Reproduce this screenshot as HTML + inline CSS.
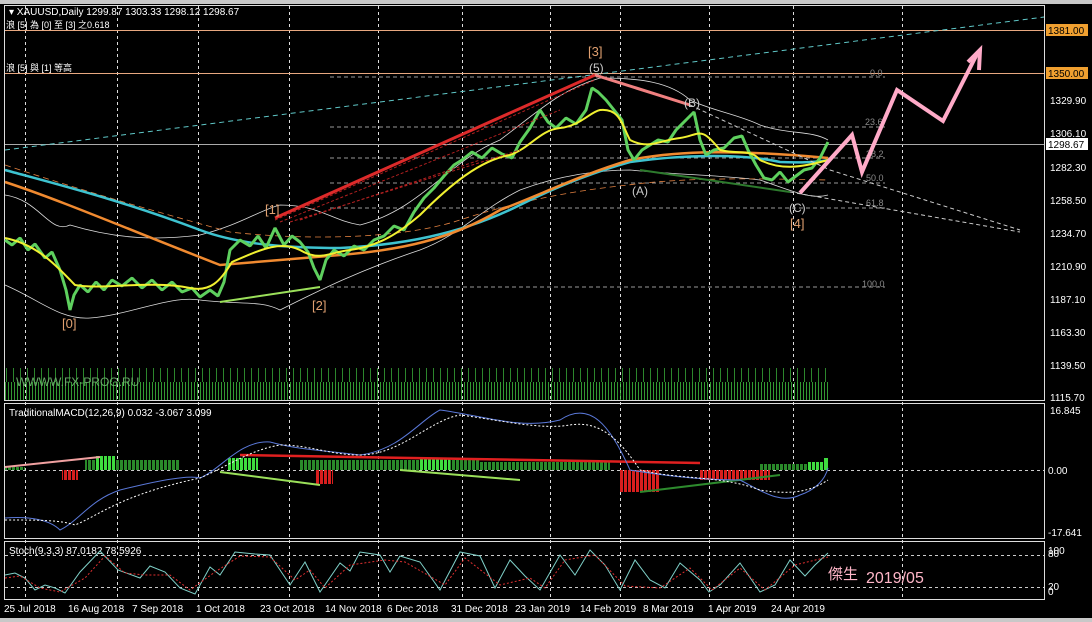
<!DOCTYPE html>
<html><head><meta charset="utf-8"><style>
html,body{margin:0;padding:0;background:#000;width:1092px;height:622px;overflow:hidden}
svg{display:block}
text{font-family:"Liberation Sans","Noto Sans CJK TC",sans-serif;}
</style></head><body>
<svg width="1092" height="622" viewBox="0 0 1092 622" xmlns="http://www.w3.org/2000/svg">
<defs>
<pattern id="vol" x="5" y="0" width="3" height="10" patternUnits="userSpaceOnUse"><rect x="0" y="0" width="1" height="10" fill="#3fbf3f"/></pattern>
<pattern id="vol2" x="6" y="0" width="7" height="10" patternUnits="userSpaceOnUse"><rect x="0" y="0" width="1" height="10" fill="#3fbf3f"/></pattern>
<pattern id="hg" x="0" y="0" width="4" height="10" patternUnits="userSpaceOnUse"><rect x="0" y="0" width="3" height="10" fill="#2a8a2a"/></pattern>
<pattern id="hl" x="0" y="0" width="4" height="10" patternUnits="userSpaceOnUse"><rect x="0" y="0" width="3" height="10" fill="#3fdc3f"/></pattern>
<pattern id="hr" x="0" y="0" width="4" height="10" patternUnits="userSpaceOnUse"><rect x="0" y="0" width="3" height="10" fill="#d81e1e"/></pattern>
</defs>
<rect width="1092" height="622" fill="#000"/>
<rect x="0" y="0" width="1092" height="4" fill="#c8c8c8"/>
<rect x="4.5" y="5.5" width="1040" height="395" fill="none" stroke="#ddd" stroke-width="1"/>
<rect x="4.5" y="403.5" width="1040" height="135" fill="none" stroke="#ddd" stroke-width="1"/>
<rect x="4.5" y="541.5" width="1040" height="58" fill="none" stroke="#ddd" stroke-width="1"/>
<g stroke="#ddd" stroke-dasharray="3,3" stroke-width="1">
<path d="M25.5 6V599M117.5 6V599M198.5 6V599M289.5 6V599M378.5 6V599M462.5 6V599M550.5 6V599M620.5 6V599M709.5 6V599M793.5 6V599M902.5 6V599"/>
</g>
<line x1="5" y1="30.5" x2="1044" y2="30.5" stroke="#e8a880" />
<line x1="5" y1="73.5" x2="1044" y2="73.5" stroke="#e8a880" />
<line x1="5" y1="144.5" x2="1044" y2="144.5" stroke="#aaa" />
<g stroke="#999" stroke-dasharray="4,3">
<path d="M330 77H885M330 127H885M330 158H885M330 183H885M330 208H885M330 287H885"/>
</g>
<g fill="#888" font-size="9"><text x="870" y="76">0.0</text><text x="865" y="125">23.6</text><text x="866" y="157">38.2</text><text x="866" y="181">50.0</text><text x="866" y="206">61.8</text><text x="862" y="287">100.0</text></g>
<line x1="5" y1="150" x2="1044" y2="17" stroke="#5fc7c7" stroke-dasharray="5,4"/>
<rect x="5" y="382" width="823" height="18" fill="url(#vol)" opacity="0.8"/>
<rect x="5" y="368" width="823" height="14" fill="url(#vol2)" opacity="0.7"/>
<text x="16" y="386" fill="#6a6" font-size="12">WWWW.FX-PROG.RU</text>
<g fill="none" stroke="#ddd" stroke-width="0.8">
<path d="M5 195 C40 200 50 235 70 225 C120 240 160 240 200 235 C240 225 260 210 280 205 C320 205 330 220 360 225 C420 210 450 160 500 140 C540 110 560 90 600 78 C640 78 670 82 690 100 C710 110 740 115 760 125 C790 135 810 130 828 140"/>
<path d="M5 285 C40 300 60 320 90 318 C130 315 170 295 200 300 C240 305 260 300 280 310 C320 290 360 270 420 250 C460 235 480 210 520 190 C560 175 600 170 630 170 C680 175 720 175 760 180 C790 190 810 200 828 195"/>
</g>
<path d="M5 165 C80 190 150 210 230 232 C300 240 400 240 460 220 C520 200 580 190 628 185 C680 178 740 178 828 180" fill="none" stroke="#e08040" stroke-dasharray="6,4" stroke-width="0.8"/>
<path d="M5 170 C60 185 120 200 200 230 C240 245 290 248 340 248 C400 245 460 235 520 205 C560 185 600 170 630 162 C680 155 740 153 780 162 C800 163 820 162 828 160" fill="none" stroke="#3ec3d0" stroke-width="2.5"/>
<path d="M5 182 C60 200 130 230 220 265 C260 262 300 258 340 255 C400 250 450 240 500 210 C540 195 580 175 630 160 C680 150 740 150 828 158" fill="none" stroke="#f08a30" stroke-width="2.5"/>
<path d="M5 240 L12 245 L20 238 L28 250 L35 244 L45 258 L52 252 L60 270 L66 290 L70 310 L74 295 L80 285 L88 292 L96 282 L104 290 L112 280 L122 286 L132 278 L142 288 L152 280 L162 290 L172 282 L182 292 L192 288 L200 297 L210 290 L218 296 L224 282 L230 250 L240 240 L250 246 L258 236 L266 248 L275 228 L284 245 L292 236 L300 242 L308 252 L314 268 L320 280 L326 260 L334 250 L344 256 L354 246 L364 250 L374 240 L384 236 L394 226 L404 230 L414 212 L424 198 L434 188 L444 176 L454 165 L462 160 L472 152 L482 158 L492 148 L502 154 L512 158 L520 142 L530 128 L540 110 L548 122 L556 128 L566 118 L576 124 L586 110 L592 88 L598 92 L606 100 L614 110 L622 120 L628 150 L634 160 L642 150 L650 145 L658 140 L668 142 L676 130 L686 120 L694 112 L700 140 L706 155 L714 150 L724 148 L734 138 L742 136 L748 150 L756 165 L764 178 L772 180 L780 172 L788 182 L796 176 L804 170 L812 168 L820 158 L828 142" fill="none" stroke="#5ed05e" stroke-width="3" stroke-linejoin="bevel"/>
<path d="M5 238 C40 245 60 270 75 285 C100 290 150 280 190 288 C210 292 220 282 232 262 C260 250 280 240 300 250 C320 262 330 252 350 250 C380 246 400 232 420 215 C450 185 480 160 510 155 C530 148 540 130 560 128 C580 126 590 112 600 110 C620 108 622 125 630 140 C650 150 660 140 680 138 C700 135 700 125 720 150 C740 155 750 148 760 160 C780 170 800 168 828 160" fill="none" stroke="#f0f030" stroke-width="2"/>
<path d="M220 302 L320 287" stroke="#9be05a" stroke-width="2"/>
<path d="M640 170 L790 192" stroke="#2d7a2d" stroke-width="2"/>
<path d="M275 218 L595 75" stroke="#dd2a2a" stroke-width="3"/>
<g stroke="#b02020" stroke-dasharray="3,2" stroke-width="1"><path d="M275 220 L595 80M280 222 L560 110M290 222 L520 150M300 220 L480 160"/></g>
<path d="M595 75 L690 105" stroke="#f08080" stroke-width="3"/>
<path d="M690 105 L830 170" stroke="#ccc" stroke-dasharray="4,3"/>
<path d="M790 192 L1020 232" stroke="#ccc" stroke-dasharray="4,3"/>
<path d="M830 170 L1020 230" stroke="#ccc" stroke-dasharray="4,3"/>
<path d="M800 193 L852 135 L862 172 L897 90 L943 121 L978 52" fill="none" stroke="#ffaac8" stroke-width="4" stroke-linejoin="miter"/>
<path d="M968 62 L980 50 L979 70" fill="none" stroke="#ffaac8" stroke-width="4"/>
<g fill="#e0a070" font-size="13"><text x="62" y="328">[0]</text><text x="265" y="214">[1]</text><text x="312" y="310">[2]</text><text x="588" y="56">[3]</text><text x="790" y="228">[4]</text></g>
<g fill="#ccc" font-size="12"><text x="589" y="72">(5)</text><text x="684" y="107">(B)</text><text x="632" y="195">(A)</text><text x="789" y="212">(C)</text></g>
<text x="9" y="15" fill="#fff" font-size="10">▾ XAUUSD,Daily  1299.87 1303.33 1298.12 1298.67</text>
<text x="6" y="28" fill="#fff" font-size="9">浪 [5] 為 [0] 至 [3] 之0.618</text>
<text x="6" y="71" fill="#fff" font-size="9">浪 [5] 與 [1] 等高</text>
<g fill="#fff" font-size="10">
<text x="1050" y="104">1329.90</text><text x="1050" y="137">1306.10</text><text x="1050" y="171">1282.30</text><text x="1050" y="204">1258.50</text><text x="1050" y="237">1234.70</text><text x="1050" y="270">1210.90</text><text x="1050" y="303">1187.10</text><text x="1050" y="336">1163.30</text><text x="1050" y="369">1139.50</text><text x="1050" y="401">1115.70</text>
<text x="1050" y="414">16.845</text><text x="1048" y="474">0.00</text><text x="1048" y="536">-17.641</text>
<text x="1048" y="554">100</text><text x="1048" y="557">80</text><text x="1048" y="590">20</text><text x="1048" y="595">0</text>
</g>
<rect x="1046" y="24" width="42" height="12" fill="#f0a030"/><text x="1048" y="34" font-size="10" fill="#000">1381.00</text>
<rect x="1046" y="67" width="42" height="12" fill="#f0a030"/><text x="1048" y="77" font-size="10" fill="#000">1350.00</text>
<rect x="1046" y="138" width="42" height="12" fill="#fff"/><text x="1048" y="148" font-size="10" fill="#000">1298.67</text>
<text x="9" y="416" fill="#fff" font-size="10">TraditionalMACD(12,26,9) 0.032 -3.067 3.099</text>
<line x1="5" y1="470.5" x2="1044" y2="470.5" stroke="#ccc" stroke-dasharray="3,3"/>
<g><rect x="5" y="467" width="20" height="3" fill="url(#hg)"/><rect x="85" y="460" width="95" height="10" fill="url(#hg)"/><rect x="300" y="460" width="180" height="10" fill="url(#hg)"/><rect x="480" y="462" width="130" height="8" fill="url(#hg)"/><rect x="760" y="464" width="65" height="6" fill="url(#hg)"/></g>
<g><rect x="95" y="456" width="20" height="14" fill="url(#hl)"/><rect x="228" y="458" width="30" height="12" fill="url(#hl)"/><rect x="420" y="458" width="30" height="12" fill="url(#hl)"/><rect x="808" y="462" width="16" height="8" fill="url(#hl)"/><rect x="824" y="458" width="4" height="12" fill="#3fdc3f"/></g>
<g><rect x="62" y="470" width="16" height="10" fill="url(#hr)"/><rect x="315" y="470" width="18" height="14" fill="url(#hr)"/><rect x="620" y="470" width="40" height="22" fill="url(#hr)"/><rect x="700" y="470" width="70" height="10" fill="url(#hr)"/></g>
<path d="M5 467 L100 457" stroke="#f0a0a0" stroke-width="2"/>
<path d="M240 455 L700 463" stroke="#e02020" stroke-width="2.5"/>
<path d="M220 472 L320 485" stroke="#9be05a" stroke-width="2"/>
<path d="M400 470 L520 480" stroke="#9be05a" stroke-width="2"/>
<path d="M640 492 L780 475" stroke="#2d8a2d" stroke-width="2"/>
<path d="M5 518 C30 516 50 520 60 530 C80 520 90 500 120 490 C160 480 190 475 200 478 C220 470 240 440 270 442 C300 450 320 450 360 455 C400 450 420 420 440 410 C480 415 520 430 560 420 C590 400 610 425 630 470 C660 475 700 480 740 480 C760 490 780 505 800 495 C815 490 825 480 828 468" fill="none" stroke="#5a78d8" stroke-width="1"/>
<path d="M5 520 C40 520 60 520 75 525 C100 515 120 495 200 478 C230 465 250 450 280 445 C310 445 330 455 360 455 C400 455 430 420 460 415 C500 420 540 430 570 425 C600 420 620 440 640 470 C680 480 720 475 760 490 C790 495 810 492 828 480" fill="none" stroke="#fff" stroke-width="1" stroke-dasharray="2,2"/>
<text x="9" y="554" fill="#fff" font-size="10">Stoch(9,3,3) 87.0182 78.5926</text>
<line x1="5" y1="555.5" x2="1044" y2="555.5" stroke="#ccc" stroke-dasharray="3,3"/>
<line x1="5" y1="587.5" x2="1044" y2="587.5" stroke="#ccc" stroke-dasharray="3,3"/>
<path d="M5 575 L15 573 L25 578 L35 590 L45 585 L55 588 L65 593 L80 572 L100 551 L118 570 L140 578 L150 566 L165 572 L180 588 L195 594 L210 567 L220 575 L235 552 L255 554 L270 555 L290 585 L305 562 L320 592 L340 563 L350 571 L360 552 L380 555 L390 572 L400 556 L420 562 L440 590 L460 552 L480 556 L495 588 L510 560 L525 576 L540 590 L560 555 L575 575 L590 550 L605 565 L620 590 L635 560 L650 580 L665 588 L680 563 L700 580 L709 592 L720 585 L740 563 L760 592 L775 585 L790 560 L805 576 L815 565 L828 553" fill="none" stroke="#7fd0c8" stroke-width="1"/>
<path d="M5 578 L20 576 L40 588 L60 592 L85 578 L105 556 L125 573 L145 575 L170 575 L190 590 L215 572 L240 556 L270 557 L295 580 L310 570 L325 588 L350 565 L385 560 L405 562 L445 585 L465 558 L500 585 L530 578 L545 588 L565 560 L595 555 L625 586 L660 588 L690 568 L712 590 L740 568 L765 590 L795 565 L828 557" fill="none" stroke="#e03030" stroke-width="1" stroke-dasharray="2,2"/>
<text x="828" y="579" fill="#ffb6c8" font-size="15">傑生</text><text x="866" y="583" fill="#ffb6c8" font-size="16">2019/05</text>
<g fill="#fff" font-size="10">
<text x="4" y="612">25 Jul 2018</text><text x="68" y="612">16 Aug 2018</text><text x="132" y="612">7 Sep 2018</text><text x="196" y="612">1 Oct 2018</text><text x="260" y="612">23 Oct 2018</text><text x="325" y="612">14 Nov 2018</text><text x="387" y="612">6 Dec 2018</text><text x="451" y="612">31 Dec 2018</text><text x="515" y="612">23 Jan 2019</text><text x="580" y="612">14 Feb 2019</text><text x="643" y="612">8 Mar 2019</text><text x="708" y="612">1 Apr 2019</text><text x="771" y="612">24 Apr 2019</text>
</g>
<rect x="0" y="618" width="1092" height="4" fill="#c8c8c8"/>
</svg>
</body></html>
